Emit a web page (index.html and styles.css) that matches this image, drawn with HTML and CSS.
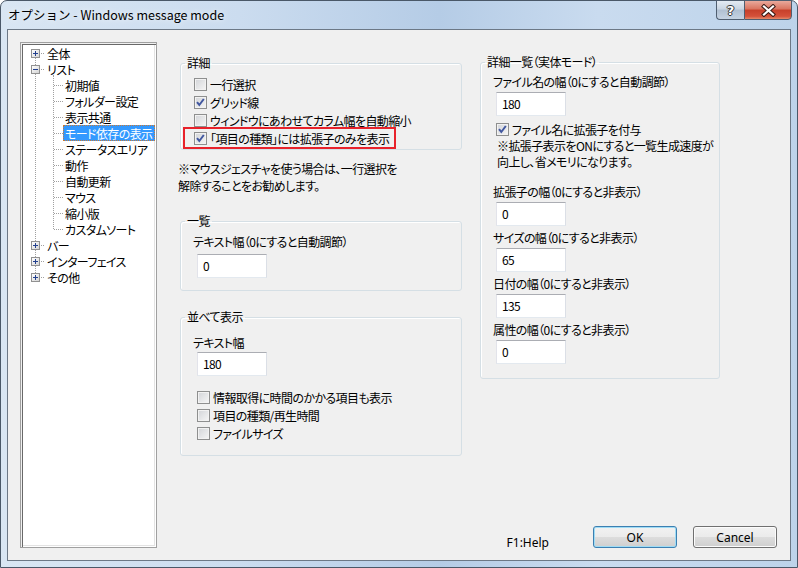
FILE: index.html
```html
<!DOCTYPE html>
<html lang="ja">
<head>
  <meta charset="UTF-8" />
  <title>オプション - Windows message mode</title>
  <link rel="stylesheet" href="styles.css">
</head>
<body>

  <div class="window">
    <!-- TITLE BAR -->
    <div class="titlebar">
      <span class="title">オプション - Windows message mode</span>
      <div class="caption-buttons">
        <span class="cap-btn help">?</span>
        <span class="cap-btn close">
          <svg width="17" height="13" viewBox="0 0 17 13">
            <path d="M4 2.5 L13 10.5 M13 2.5 L4 10.5" stroke="#3a1a14" stroke-width="4.2" stroke-linecap="square"/>
            <path d="M4 2.5 L13 10.5 M13 2.5 L4 10.5" stroke="#ffffff" stroke-width="2.2" stroke-linecap="square"/>
          </svg>
        </span>
      </div>
    </div>

    <div class="client">
      <!-- TREE -->
      <div class="tree">
        <ul class="tree-root">
          <li><div class="row"><span class="exp"><svg width="7" height="7"><path d="M1 3.5h5M3.5 1v5" stroke="#23408e"/></svg></span><span class="label">全体</span></div></li>
          <li>
            <div class="row"><span class="exp"><svg width="7" height="7"><path d="M1 3.5h5" stroke="#23408e"/></svg></span><span class="label">リスト</span></div>
            <ul class="tree-sub">
              <li><div class="row"><span class="label">初期値</span></div></li>
              <li><div class="row"><span class="label">フォルダー設定</span></div></li>
              <li><div class="row"><span class="label">表示共通</span></div></li>
              <li><div class="row"><span class="label selected">モード依存の表示</span></div></li>
              <li><div class="row"><span class="label">ステータスエリア</span></div></li>
              <li><div class="row"><span class="label">動作</span></div></li>
              <li><div class="row"><span class="label">自動更新</span></div></li>
              <li><div class="row"><span class="label">マウス</span></div></li>
              <li><div class="row"><span class="label">縮小版</span></div></li>
              <li><div class="row"><span class="label">カスタムソート</span></div></li>
            </ul>
          </li>
          <li><div class="row"><span class="exp"><svg width="7" height="7"><path d="M1 3.5h5M3.5 1v5" stroke="#23408e"/></svg></span><span class="label">バー</span></div></li>
          <li><div class="row"><span class="exp"><svg width="7" height="7"><path d="M1 3.5h5M3.5 1v5" stroke="#23408e"/></svg></span><span class="label">インターフェイス</span></div></li>
          <li><div class="row"><span class="exp"><svg width="7" height="7"><path d="M1 3.5h5M3.5 1v5" stroke="#23408e"/></svg></span><span class="label">その他</span></div></li>
        </ul>
      </div>

      <!-- PAGE -->
      <div class="page">
        <div class="columns">
          <div class="col-left">
            <fieldset class="group">
              <legend>詳細</legend>
              <div class="group-body detail-body">
                <div class="check"><span class="cb"></span>一行選択</div>
                <div class="check"><span class="cb"><svg width="11" height="11" viewBox="0 0 11 11"><path d="M2 5.2 L4.3 8 L8.8 2" stroke="#4258a0" stroke-width="2" fill="none"/></svg></span>グリッド線</div>
                <div class="check"><span class="cb"></span>ウィンドウにあわせてカラム幅を自動縮小</div>
                <div class="check marked"><span class="cb"><svg width="11" height="11" viewBox="0 0 11 11"><path d="M2 5.2 L4.3 8 L8.8 2" stroke="#4258a0" stroke-width="2" fill="none"/></svg></span>「項目の種類」には拡張子のみを表示</div>
              </div>
            </fieldset>

            <p class="note">※マウスジェスチャを使う場合は、一行選択を<br>解除することをお勧めします。</p>

            <fieldset class="group list-group">
              <legend>一覧</legend>
              <div class="group-body list-body">
                <div class="field-label">テキスト幅（0にすると自動調節）</div>
                <div class="textbox">0</div>
              </div>
            </fieldset>

            <fieldset class="group side-group">
              <legend>並べて表示</legend>
              <div class="group-body side-body">
                <div class="field-label">テキスト幅</div>
                <div class="textbox tight">180</div>
                <div class="checks">
                  <div class="check"><span class="cb"></span>情報取得に時間のかかる項目も表示</div>
                  <div class="check"><span class="cb"></span>項目の種類/再生時間</div>
                  <div class="check"><span class="cb"></span>ファイルサイズ</div>
                </div>
              </div>
            </fieldset>
          </div>

          <div class="col-right">
            <fieldset class="group">
              <legend>詳細一覧（実体モード）</legend>
              <div class="group-body right-body">
                <div class="field-label">ファイル名の幅（0にすると自動調節）</div>
                <div class="textbox">180</div>
                <div class="check ext-check"><span class="cb"><svg width="11" height="11" viewBox="0 0 11 11"><path d="M2 5.2 L4.3 8 L8.8 2" stroke="#4258a0" stroke-width="2" fill="none"/></svg></span>ファイル名に拡張子を付与</div>
                <p class="ext-note">※拡張子表示をONにすると一覧生成速度が<br>向上し、省メモリになります。</p>
                <div class="field-label gap">拡張子の幅（0にすると非表示）</div>
                <div class="textbox">0</div>
                <div class="field-label">サイズの幅（0にすると非表示）</div>
                <div class="textbox">65</div>
                <div class="field-label">日付の幅（0にすると非表示）</div>
                <div class="textbox">135</div>
                <div class="field-label">属性の幅（0にすると非表示）</div>
                <div class="textbox">0</div>
              </div>
            </fieldset>
          </div>
        </div>

        <!-- FOOTER -->
        <div class="footer">
          <span class="help-text">F1:Help</span>
          <button class="btn default">OK</button>
          <button class="btn">Cancel</button>
        </div>
      </div>
    </div>
  </div>

</body>
</html>
```

FILE: styles.css
```css
body {
  margin: 0;
  background: #ffffff;
  font-family: "Noto Sans CJK JP", "Noto Sans", sans-serif;
  font-size: 12px;
  font-feature-settings: "palt";
  letter-spacing: -0.6px;
  color: #000;
}

ul {
  list-style: none;
  margin: 0;
  padding: 0;
}

p {
  margin: 0;
}

/* window frame */
.window {
  width: 798px;
  height: 568px;
  box-sizing: border-box;
  border: 1px solid #4a5868;
  border-radius: 7px 7px 0 0;
  padding: 0 6px 6px 6px;
  background: linear-gradient(90deg, #d9e6f3 0%, #cbdcef 30%, #b5cce6 55%, #c9dbef 75%, #bdd3ea 100%);
  display: flex;
  flex-direction: column;
}

.titlebar {
  height: 28px;
  display: flex;
  align-items: flex-start;
}

.title {
  padding: 5px 0 0 1px;
  line-height: 18px;
  font-size: 12.5px;
  letter-spacing: 0;
  font-feature-settings: normal;
  text-shadow: 0 0 6px rgba(255, 255, 255, 0.9);
}

.caption-buttons {
  margin-left: auto;
  margin-right: -1px;
  margin-top: -1px;
  display: flex;
}

.cap-btn {
  height: 20px;
  box-sizing: border-box;
  border: 1px solid #4f5e70;
  display: flex;
  align-items: center;
  justify-content: center;
}

.help {
  width: 28px;
  border-right: none;
  border-radius: 0 0 0 4px;
  background: linear-gradient(#e4ebf3, #c9d5e2 45%, #b0c0d2 50%, #c5d3e3);
  color: #fff;
  font-family: "DejaVu Sans", sans-serif;
  font-weight: bold;
  font-size: 13px;
  letter-spacing: 0;
  text-shadow: 1px 0 0 #333, -1px 0 0 #333, 0 1px 0 #333, 0 -1px 0 #333;
}

.close {
  width: 48px;
  border-radius: 0 0 4px 0;
  background: linear-gradient(#e9a99c, #d9735f 45%, #c7402a 50%, #d5513a 85%, #e58a6a);
}

.client {
  flex: 1;
  background: #f0f0f0;
  border: 1px solid #6c7886;
  display: flex;
  padding: 12px 13px 12px 12px;
}

/* tree */
.tree {
  width: 137px;
  box-sizing: border-box;
  background: #fff;
  border: 1px solid #a0a0a0;
  box-shadow: inset 1px 1px 0 #f0f0f0, inset 2px 2px 0 #696969, inset -1px -1px 0 #ffffff, inset -2px -2px 0 #e3e3e3;
  padding-top: 2px;
}

.tree-root {
  position: relative;
}

.tree-root::before {
  content: "";
  position: absolute;
  left: 14px;
  top: 8px;
  bottom: 8px;
  border-left: 1px dotted #a0a0a0;
}

.row {
  position: relative;
  height: 16px;
  display: flex;
  align-items: center;
  padding-left: 10px;
}

.tree-root > li > .row::before {
  content: "";
  position: absolute;
  left: 15px;
  width: 8px;
  top: 8px;
  border-top: 1px dotted #a0a0a0;
}

.exp {
  position: relative;
  width: 9px;
  height: 9px;
  box-sizing: border-box;
  border: 1px solid #919191;
  background: linear-gradient(135deg, #ffffff, #d4d4d4);
  display: flex;
}

.label {
  position: relative;
  margin-left: 5px;
  padding: 0 1px;
  height: 16px;
  line-height: 15px;
  box-sizing: border-box;
  border: 1px solid transparent;
  white-space: nowrap;
}

.tree-sub {
  position: relative;
}

.tree-sub::before {
  content: "";
  position: absolute;
  left: 32px;
  top: -2px;
  bottom: 8px;
  border-left: 1px dotted #a0a0a0;
}

.tree-sub .row {
  padding-left: 42px;
}

.tree-sub .row::before {
  content: "";
  position: absolute;
  left: 33px;
  width: 9px;
  top: 8px;
  border-top: 1px dotted #a0a0a0;
}

.tree-sub .label {
  margin-left: 0;
}

.label.selected {
  background: #3399ff;
  color: #fff;
  border: 1px dotted #c87a36;
}

/* page */
.page {
  flex: 1;
  display: flex;
  flex-direction: column;
  padding-left: 23px;
}

.columns {
  display: flex;
  gap: 18px;
  margin-top: 13px;
}

.col-left {
  width: 282px;
  margin-top: 1px;
}

.col-right {
  width: 240px;
}

.group {
  margin: 0;
  padding: 0;
  min-width: 0;
  border: 1px solid #d5dfe5;
  border-radius: 3px;
  box-shadow: inset 1px 1px 0 #fff;
}

.group legend {
  margin-left: 4px;
  padding: 0 2px;
  line-height: 14px;
  font-size: 12px;
}

.group-body {
  padding: 6px 12px 12px 12px;
}

.detail-body {
  padding: 5px 0 2px 13px;
}

.check {
  height: 18px;
  display: flex;
  align-items: center;
  white-space: nowrap;
}

.cb {
  width: 13px;
  height: 13px;
  box-sizing: border-box;
  border: 1px solid #8e8f8f;
  background: linear-gradient(135deg, #d2d4d8, #f6f6f6);
  box-shadow: inset 0 0 0 1px #f2f2f2;
  margin-right: 3px;
  display: flex;
  flex-shrink: 0;
}

.check.marked {
  width: fit-content;
  margin: -2px 0 -2px -11px;
  padding: 0 5px 0 9px;
  border: 2px solid #e8222b;
}

.note {
  margin: 10px 0 0 -2px;
  line-height: 17px;
  white-space: nowrap;
}

.list-group {
  margin-top: 20px;
}

.side-group {
  margin-top: 19px;
}

.field-label {
  line-height: 16px;
  white-space: nowrap;
}

.textbox {
  width: 70px;
  height: 24px;
  box-sizing: border-box;
  margin: 4px 0 0 4px;
  padding-left: 5px;
  line-height: 22px;
  background: #fff;
  border: 1px solid;
  border-color: #abadb3 #dbdfe6 #e3e9ef #e2e3ea;
}

.side-body {
  padding: 11px 12px 13px 12px;
}

.textbox.tight {
  margin-top: 1px;
}

.checks {
  margin: 12px 0 0 4px;
}

.right-body {
  padding: 5px 12px 14px 12px;
}

.right-body .textbox {
  margin: 2px 0 0 3px;
}

.right-body .field-label {
  margin-top: 4px;
}

.right-body .field-label:first-child {
  margin-top: 0;
}

.right-body .field-label.gap {
  margin-top: 14px;
}

.ext-check {
  margin: 4px 0 0 3px;
}

.ext-note {
  margin-left: 4px;
  line-height: 16px;
  white-space: nowrap;
}

/* footer */
.footer {
  margin-top: auto;
  display: flex;
  align-items: flex-end;
  justify-content: flex-end;
}

.help-text {
  font-family: "Noto Sans", sans-serif;
  letter-spacing: 0;
  line-height: 16px;
  margin: 0 28px -3px 0;
}

.btn {
  width: 84px;
  height: 22px;
  margin-left: 16px;
  font-family: "Noto Sans", sans-serif;
  font-size: 12px;
  letter-spacing: 0;
  color: #000;
  border: 1px solid #707070;
  border-radius: 3px;
  background: linear-gradient(#f2f2f2, #ebebeb 50%, #dddddd 50%, #cfcfcf);
  box-shadow: inset 0 0 0 1px #fcfcfc;
  padding: 0;
}

.btn.default {
  border-color: #3c7fb1;
  box-shadow: inset 0 0 0 1px #9fdcf5;
}
```
